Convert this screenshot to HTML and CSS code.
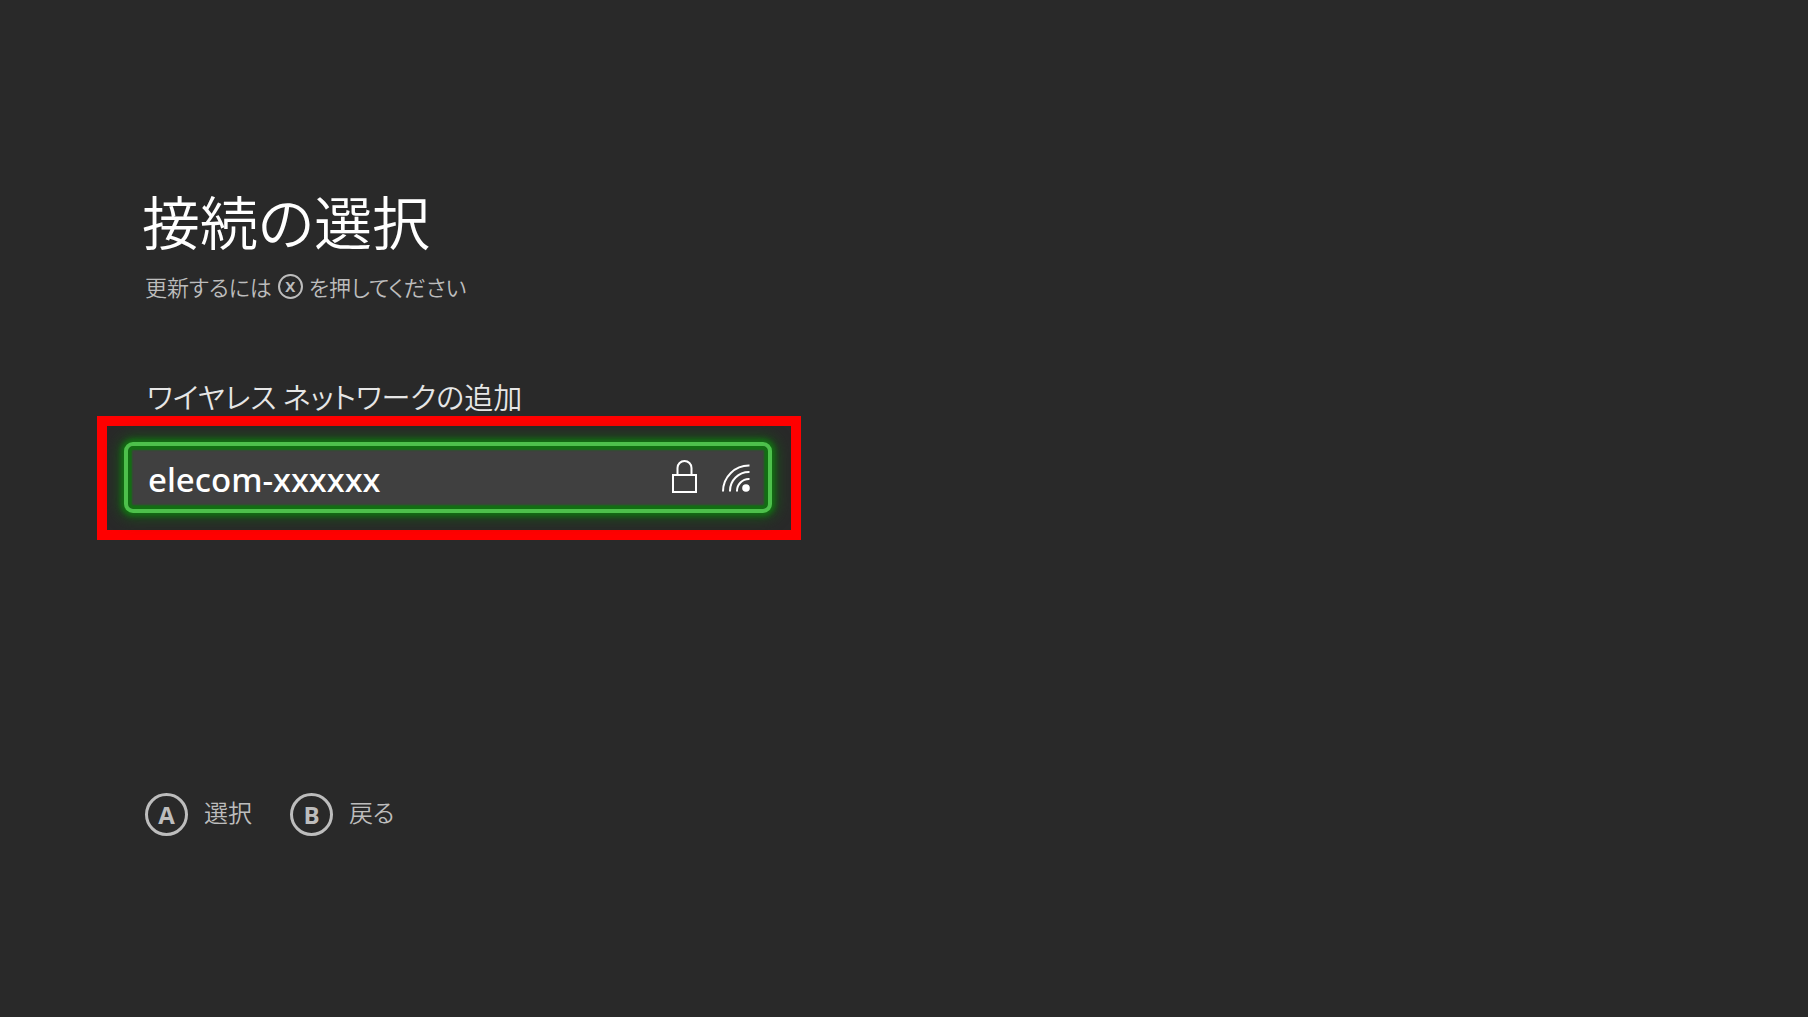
FILE: index.html
```html
<!DOCTYPE html>
<html lang="ja">
<head>
    <meta charset="UTF-8">
    <meta name="viewport" content="width=device-width, initial-scale=1.0">
    <title>接続の選択</title>
    <link rel="stylesheet" href="styles.css">
</head>
<body>

    <main class="setup">
        <header class="setup-header">
            <h1>接続の選択</h1>
            <p>更新するには <span class="key key-small">X</span> を押してください</p>
        </header>

        <section class="networks">
            <button type="button" class="add-network">ワイヤレス ネットワークの追加</button>

            <div class="highlight">
                <button type="button" class="network">
                    <span class="network-name">elecom-xxxxxx</span>
                    <svg class="icon-lock" viewBox="0 0 26 38" aria-hidden="true">
                        <rect x="1" y="16" width="23" height="17"/>
                        <path d="M5.500 16V9a7 7 0 0 1 14 0V16"/>
                    </svg>
                    <svg class="icon-wifi" viewBox="0 0 28 28" aria-hidden="true">
                        <path d="M1 27.500A26 26 0 0 1 27.500 1.500M8 27.500A19 19 0 0 1 27.500 8M15 27.500A12 12 0 0 1 27.500 15"/>
                        <circle cx="24" cy="24" r="3.800"/>
                    </svg>
                </button>
            </div>
        </section>

        <footer class="hints">
            <button type="button" class="hint"><span class="key">A</span><span class="hint-text">選択</span></button>
            <button type="button" class="hint"><span class="key">B</span><span class="hint-text">戻る</span></button>
        </footer>
    </main>

</body>
</html>
```

FILE: styles.css
```css
/* General Styles */
* {
    box-sizing: border-box;
}

body {
    margin: 0;
    background: #292929;
    color: #f2f2f2;
    font-family: "Noto Sans CJK JP", sans-serif;
    font-weight: 350;
    font-feature-settings: "palt";
}

button {
    padding: 0;
    border: none;
    background: none;
    color: inherit;
    font: inherit;
    font-feature-settings: inherit;
    text-align: left;
    cursor: pointer;
}

.setup {
    max-width: 801px;
    padding: 180px 0 0 97px;
}

/* Header */
.setup-header {
    padding-left: 45px;
}

.setup-header h1 {
    margin: 0;
    font-size: 58px;
    font-weight: 350;
    line-height: 80px;
    color: #fff;
}

.setup-header p {
    display: flex;
    align-items: center;
    gap: 6px;
    margin: 8px 0 0 3px;
    font-size: 22px;
    line-height: 36px;
    color: #bdbdbd;
}

/* Networks */
.networks {
    margin-top: 72px;
}

.add-network {
    display: block;
    padding-left: 50px;
    font-size: 29px;
    line-height: 40px;
    color: #e6e6e6;
}

.highlight {
    padding: 16px 19px 17px 17px;
    border: 10px solid #f00;
}

.network {
    display: flex;
    align-items: center;
    width: 100%;
    height: 71px;
    padding: 0 18px 0 20px;
    border: 4px solid #4dc04b;
    border-radius: 9px;
    background: #404040;
    color: #fff;
    box-shadow: 0 0 5px 3px #126f12, 0 0 14px 6px #175917bb, inset 0 0 2px 4px #126f12;
}

.network-name {
    flex: 1;
    padding-top: 4px;
    font-family: "Noto Sans", sans-serif;
    font-size: 33px;
    font-weight: 500;
    line-height: 40px;
}

.network svg {
    fill: none;
    stroke: #fff;
    stroke-width: 2;
}

.icon-lock {
    width: 26px;
    height: 38px;
    margin-right: 24px;
}

.icon-wifi {
    width: 28px;
    height: 28px;
}

.icon-wifi circle {
    fill: #fff;
    stroke: none;
}

/* Button hints */
.hints {
    display: flex;
    gap: 38px;
    margin-top: 253px;
    padding-left: 48px;
}

.hint {
    display: flex;
    align-items: center;
    gap: 16px;
    font-size: 24px;
    line-height: 36px;
    color: #bdbdbd;
}

.hint-text {
    padding-bottom: 6px;
}

.key {
    display: flex;
    align-items: center;
    justify-content: center;
    width: 43px;
    height: 43px;
    border: 3px solid #bdbdbd;
    border-radius: 50%;
    font-family: "Open Sans", sans-serif;
    font-size: 24px;
    font-weight: 700;
}

.key-small {
    width: 25px;
    height: 25px;
    border-width: 2px;
    font-size: 15px;
}
```
